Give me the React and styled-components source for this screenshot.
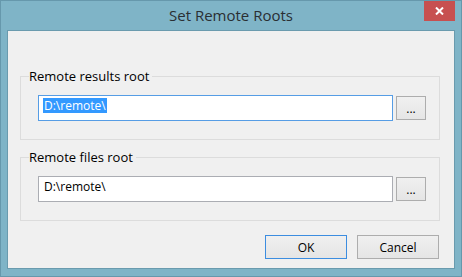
import React from 'react';
import styled, { createGlobalStyle } from 'styled-components';

const GlobalStyle = createGlobalStyle`
  html, body {
    margin: 0;
    padding: 0;
  }
  body {
    font-family: 'Open Sans', 'Noto Sans', sans-serif;
    background: #7fb4c7;
    overflow: hidden;
  }
`;

const Frame = styled.div`
  width: 462px;
  height: 277px;
  box-sizing: border-box;
  border: 1px solid #6698ac;
  background: #7fb4c7;
  display: flex;
  flex-direction: column;
`;

const TitleBar = styled.div`
  height: 29px;
  padding: 0 6px;
  display: grid;
  grid-template-columns: 1fr auto 1fr;
  align-items: start;
`;

const Title = styled.div`
  grid-column: 2;
  font-size: 15px;
  line-height: 29px;
  color: #2a2f33;
  white-space: nowrap;
`;

const CloseButton = styled.div`
  grid-column: 3;
  justify-self: end;
  width: 31px;
  height: 20px;
  background: #c75050;
  display: flex;
  align-items: center;
  justify-content: center;
`;

const Client = styled.div`
  flex: 1;
  margin: 0 6px 7px 6px;
  border: 1px solid #6a9bae;
  background: #f0f0f0;
  padding: 37px 14px 8px 12px;
  display: flex;
  flex-direction: column;
  gap: 9px;
`;

const Group = styled.fieldset`
  margin: 0;
  padding: 11px 13px 18px 8px;
  border: 1px solid #dcdcdc;
  min-width: 0;
`;

const Legend = styled.legend`
  padding: 0 3px 0 0;
  font-size: 13px;
  line-height: 16px;
  color: #000;
`;

const Row = styled.div`
  display: flex;
  align-items: center;
  gap: 3px;
  padding-left: 9px;
`;

const TextBox = styled.div`
  width: 355px;
  height: 26px;
  box-sizing: border-box;
  border: 1px solid ${p => (p.focused ? '#569de5' : '#abadb3')};
  background: #fff;
  padding: 2px 0 0 4px;
  font-size: 12px;
  line-height: 15px;
  color: #000;
  white-space: nowrap;
`;

const Selection = styled.span`
  display: inline-block;
  background: #3399ff;
  color: #fff;
  padding: 0 1px;
`;

const Plain = styled.span`
  display: inline-block;
  padding: 0 1px;
`;

const Button = styled.div`
  box-sizing: border-box;
  width: ${p => p.width}px;
  height: ${p => p.height}px;
  border: 1px solid ${p => (p.primary ? '#3c8de0' : '#adadad')};
  background: linear-gradient(#f0f0f0, #e5e5e5);
  display: flex;
  align-items: center;
  justify-content: center;
  font-size: 12px;
  color: #000;
`;

const Footer = styled.div`
  margin-top: 5px;
  display: flex;
  justify-content: flex-end;
  gap: 10px;
  padding-right: 1px;
`;

const CloseIcon = () => (
  <svg width="9" height="8" viewBox="0 0 9 8">
    <path d="M1 0.5 L8 7.5 M8 0.5 L1 7.5" stroke="#fff" strokeWidth="2" />
  </svg>
);

const PathGroup = ({ label, value, focused }) => (
  <Group>
    <Legend>{label}</Legend>
    <Row>
      <TextBox focused={focused}>
        {focused ? <Selection>{value}</Selection> : <Plain>{value}</Plain>}
      </TextBox>
      <Button width={30} height={24}>...</Button>
    </Row>
  </Group>
);

export default function App() {
  return (
    <>
      <GlobalStyle />
      <Frame>
        <TitleBar>
          <Title>Set Remote Roots</Title>
          <CloseButton>
            <CloseIcon />
          </CloseButton>
        </TitleBar>
        <Client>
          <PathGroup label="Remote results root" value="D:\remote\" focused />
          <PathGroup label="Remote files root" value="D:\remote\" />
          <Footer>
            <Button primary width={82} height={24}>OK</Button>
            <Button width={82} height={24}>Cancel</Button>
          </Footer>
        </Client>
      </Frame>
    </>
  );
}
